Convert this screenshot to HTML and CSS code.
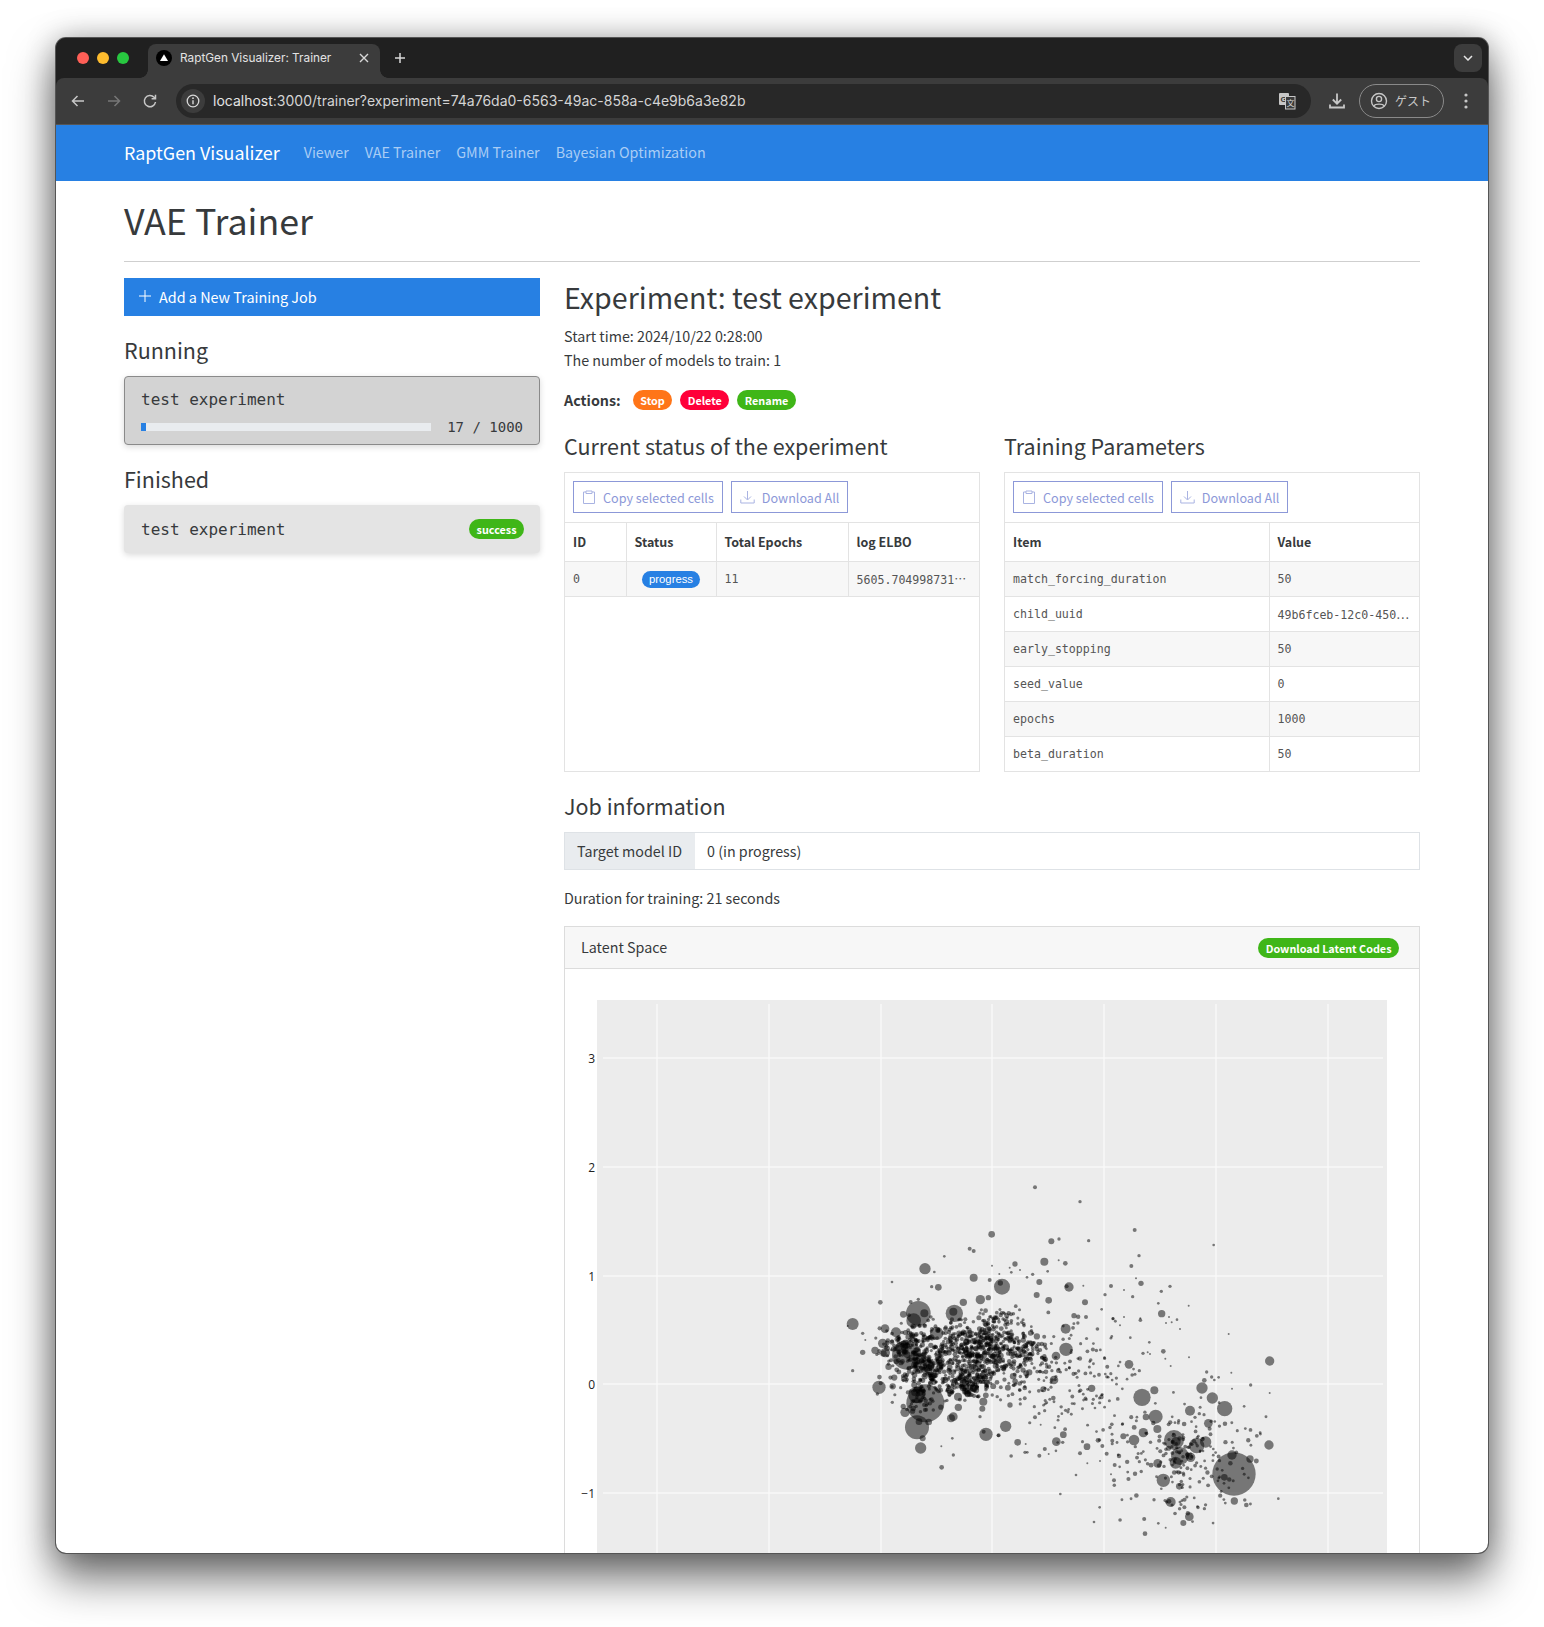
FILE: index.html
```html
<!DOCTYPE html>
<html lang="en">
<head>
    <meta charset="UTF-8">
    <meta name="viewport" content="width=device-width, initial-scale=1.0">
    <title>RaptGen Visualizer: Trainer</title>
    <link rel="stylesheet" href="styles.css">
</head>
<body>
    <div class="window">
        <div class="tabstrip">
            <div class="lights">
                <span class="light light-red"></span>
                <span class="light light-yellow"></span>
                <span class="light light-green"></span>
            </div>
            <div class="tab">
                <svg class="favicon" width="16" height="16" viewBox="0 0 16 16"><circle cx="8" cy="8" r="8" fill="#000"/><path d="M8 4.2 12 11H4z" fill="#fff"/></svg>
                <span class="tab-title">RaptGen Visualizer: Trainer</span>
                <svg class="tab-close" width="10" height="10" viewBox="0 0 10 10"><path d="M1 1l8 8M9 1l-8 8" stroke="#d8d8d8" stroke-width="1.4" fill="none"/></svg>
            </div>
            <svg class="tab-new" width="12" height="12" viewBox="0 0 12 12"><path d="M6 1v10M1 6h10" stroke="#d8d8d8" stroke-width="1.5" fill="none"/></svg>
            <div class="tab-menu">
                <svg width="10" height="6" viewBox="0 0 10 6"><path d="M1 1l4 4 4-4" stroke="#e6e6e6" stroke-width="1.5" fill="none"/></svg>
            </div>
        </div>
        <div class="toolbar">
            <svg class="tool-icon" width="16" height="16" viewBox="0 0 16 16"><path d="M14 8H2.5M7.5 3l-5 5 5 5" stroke="#c7c7c7" stroke-width="1.5" fill="none"/></svg>
            <svg class="tool-icon" width="16" height="16" viewBox="0 0 16 16"><path d="M2 8h11.500M8.500 3l5 5-5 5" stroke="#777" stroke-width="1.5" fill="none"/></svg>
            <svg class="tool-icon" width="16" height="16" viewBox="0 0 16 16"><path d="M13.500 9a5.600 5.600 0 1 1-1.400-4.700L13.500 5.700M13.500 1.800v3.900H9.600" stroke="#c7c7c7" stroke-width="1.5" fill="none"/></svg>
            <div class="omnibox">
                <span class="site-info">
                    <svg width="14" height="14" viewBox="0 0 14 14"><circle cx="7" cy="7" r="5.800" stroke="#d8d8d8" stroke-width="1.300" fill="none"/><path d="M7 6.200v4" stroke="#d8d8d8" stroke-width="1.400"/><circle cx="7" cy="4.200" r=".9" fill="#d8d8d8"/></svg>
                </span>
                <span class="url">localhost<span class="url-dim">:3000/trainer?experiment=74a76da0-6563-49ac-858a-c4e9b6a3e82b</span></span>
                <svg class="translate" width="18" height="18" viewBox="0 0 18 18">
                    <rect x="1" y="1" width="10" height="12" rx="1" fill="#c7c7c7"/>
                    <text x="2.500" y="10" font-size="8" font-weight="700" fill="#333" font-family="Liberation Sans, sans-serif">G</text>
                    <rect x="7.500" y="4.500" width="9.500" height="12.500" fill="#3c3c3c" stroke="#c7c7c7"/>
                    <text x="8.500" y="13.500" font-size="8" fill="#d8d8d8" font-family="Noto Sans CJK JP, sans-serif">文</text>
                </svg>
            </div>
            <svg class="download" width="18" height="18" viewBox="0 0 18 18"><path d="M9 1.500v10M4.800 7.500 9 11.700l4.200-4.200M2 12.500v3h14v-3" stroke="#c7c7c7" stroke-width="1.800" fill="none"/></svg>
            <div class="profile">
                <svg width="18" height="18" viewBox="0 0 18 18"><circle cx="9" cy="9" r="7.500" stroke="#c7c7c7" stroke-width="1.400" fill="none"/><circle cx="9" cy="7" r="2.600" stroke="#c7c7c7" stroke-width="1.400" fill="none"/><path d="M3.800 13.800c1.500-2.300 9-2.300 10.400 0" stroke="#c7c7c7" stroke-width="1.400" fill="none"/></svg>
                <span class="profile-name">ゲスト</span>
            </div>
            <svg class="kebab" width="4" height="16" viewBox="0 0 4 16"><circle cx="2" cy="2" r="1.600" fill="#c7c7c7"/><circle cx="2" cy="8" r="1.600" fill="#c7c7c7"/><circle cx="2" cy="14" r="1.600" fill="#c7c7c7"/></svg>
        </div>

        <nav class="navbar">
            <span class="brand">RaptGen Visualizer</span>
            <a class="nav-link">Viewer</a>
            <a class="nav-link">VAE Trainer</a>
            <a class="nav-link">GMM Trainer</a>
            <a class="nav-link">Bayesian Optimization</a>
        </nav>

        <main class="container">
            <h1 class="page-title">VAE Trainer</h1>
            <hr class="divider">
            <div class="columns">
                <aside>
                    <button class="add-job">
                        <svg width="12" height="12" viewBox="0 0 12 12"><path d="M6 0v12M0 6h12" stroke="#fff" stroke-width="1" fill="none"/></svg>
                        Add a New Training Job
                    </button>
                    <h4 class="section-title">Running</h4>
                    <div class="job-card job-running">
                        <div class="job-name">test experiment</div>
                        <div class="job-progress">
                            <div class="bar"><div class="bar-fill"></div></div>
                            <span class="bar-label">17 / 1000</span>
                        </div>
                    </div>
                    <h4 class="section-title">Finished</h4>
                    <div class="job-card job-finished">
                        <div class="job-name">test experiment</div>
                        <span class="pill pill-green">success</span>
                    </div>
                </aside>

                <section>
                    <h3 class="experiment-title">Experiment: test experiment</h3>
                    <div class="meta">Start time: 2024/10/22 0:28:00</div>
                    <div class="meta">The number of models to train: 1</div>
                    <div class="actions">
                        <b>Actions:</b>
                        <span class="pill pill-orange">Stop</span>
                        <span class="pill pill-red">Delete</span>
                        <span class="pill pill-green">Rename</span>
                    </div>

                    <div class="tables">
                        <div>
                            <h4 class="section-title">Current status of the experiment</h4>
                            <div class="grid-box">
                                <div class="grid-tools">
                                    <button class="tool-btn">
                                        <svg width="14" height="14" viewBox="0 0 14 14"><path d="M4 2H1.500v11.500h11V2H10M4 1h6v2.500H4z" stroke="#a9b3e2" fill="none"/></svg>
                                        Copy selected cells
                                    </button>
                                    <button class="tool-btn">
                                        <svg width="15" height="14" viewBox="0 0 15 14"><path d="M7.500 1v8.500M4 6.500l3.500 3.500L11 6.500M.8 9.500v3.500h13.400V9.500" stroke="#a9b3e2" fill="none"/></svg>
                                        Download All
                                    </button>
                                </div>
                                <table class="grid">
                                    <colgroup><col class="col-id"><col class="col-status"><col class="col-epochs"><col></colgroup>
                                    <thead><tr><th>ID</th><th>Status</th><th>Total Epochs</th><th>log ELBO</th></tr></thead>
                                    <tbody>
                                        <tr><td>0</td><td class="cell-center"><span class="pill-small">progress</span></td><td>11</td><td>5605.704998731<span class="dots">…</span></td></tr>
                                    </tbody>
                                </table>
                            </div>
                        </div>
                        <div>
                            <h4 class="section-title">Training Parameters</h4>
                            <div class="grid-box">
                                <div class="grid-tools">
                                    <button class="tool-btn">
                                        <svg width="14" height="14" viewBox="0 0 14 14"><path d="M4 2H1.500v11.500h11V2H10M4 1h6v2.500H4z" stroke="#a9b3e2" fill="none"/></svg>
                                        Copy selected cells
                                    </button>
                                    <button class="tool-btn">
                                        <svg width="15" height="14" viewBox="0 0 15 14"><path d="M7.500 1v8.500M4 6.500l3.500 3.500L11 6.500M.8 9.500v3.500h13.400V9.500" stroke="#a9b3e2" fill="none"/></svg>
                                        Download All
                                    </button>
                                </div>
                                <table class="grid">
                                    <colgroup><col class="col-item"><col></colgroup>
                                    <thead><tr><th>Item</th><th>Value</th></tr></thead>
                                    <tbody>
                                        <tr><td>match_forcing_duration</td><td>50</td></tr>
                                        <tr><td>child_uuid</td><td>49b6fceb-12c0-450<span class="dots">…</span></td></tr>
                                        <tr><td>early_stopping</td><td>50</td></tr>
                                        <tr><td>seed_value</td><td>0</td></tr>
                                        <tr><td>epochs</td><td>1000</td></tr>
                                        <tr><td>beta_duration</td><td>50</td></tr>
                                    </tbody>
                                </table>
                            </div>
                        </div>
                    </div>

                    <h4 class="section-title">Job information</h4>
                    <div class="input-group">
                        <span class="input-label">Target model ID</span>
                        <span class="input-value">0 (in progress)</span>
                    </div>
                    <div class="duration">Duration for training: 21 seconds</div>

                    <div class="card">
                        <div class="card-header">
                            <span class="card-title">Latent Space</span>
                            <span class="pill pill-green">Download Latent Codes</span>
                        </div>
                        <svg class="plot" width="854" height="760" viewBox="0 0 854 760">
                            <rect x="32" y="31" width="790" height="729" fill="#ececec"/>
                            <g id="grid" stroke="#f8f8f8" stroke-width="1.500"></g>
                            <g class="tick-labels" text-anchor="end">
                                <text x="30" y="94">3</text>
                                <text x="30" y="203">2</text>
                                <text x="30" y="312">1</text>
                                <text x="30" y="420">0</text>
                                <text x="30" y="529">−1</text>
                            </g>
                            <g id="points" transform="translate(255 201) scale(.33333)"></g>
                        </svg>
                    </div>
                </section>
            </div>
        </main>
    </div>
    <script src="plot.js"></script>
</body>
</html>
```

FILE: styles.css
```css
* {
    box-sizing: border-box;
}
html, body {
    height: 1627px;
    overflow: hidden;
}
body {
    margin: 0;
    padding: 38px 56px 74px;
    background-color: #fff;
    color: #373a3c;
    font-family: "Noto Sans CJK JP", "Noto Sans", sans-serif;
    font-size: 14.300px;
    line-height: 24px;
}
.window {
    height: 1515px;
    overflow: hidden;
    background-color: #202020;
    border-radius: 10px;
    box-shadow: 0 0 0 1px #555, 0 24px 44px 2px rgba(0, 0, 0, .55), 0 0 30px rgba(0, 0, 0, .28);
}

/* browser chrome */
.tabstrip {
    display: flex;
    align-items: flex-end;
    height: 40px;
    background-color: #202020;
    padding-left: 21px;
}
.lights {
    display: flex;
    gap: 8px;
    align-self: center;
    margin-right: 19px;
}
.light {
    width: 12px;
    height: 12px;
    border-radius: 50%;
}
.light-red { background-color: #ff5f57; }
.light-yellow { background-color: #febc2e; }
.light-green { background-color: #28c840; }
.tab {
    position: relative;
    display: flex;
    align-items: center;
    width: 232px;
    height: 34px;
    padding: 0 11px 6px 8px;
    background-color: #3c3c3c;
    border-radius: 8px 8px 0 0;
    color: #e3e3e3;
    font-family: "Inter", sans-serif;
    font-size: 11.800px;
}
.tab::before, .tab::after {
    content: "";
    position: absolute;
    bottom: 0;
    width: 8px;
    height: 8px;
}
.tab::before {
    left: -8px;
    background: radial-gradient(circle at 0 0, transparent 7.5px, #3c3c3c 8px);
}
.tab::after {
    right: -8px;
    background: radial-gradient(circle at 100% 0, transparent 7.5px, #3c3c3c 8px);
}
.tab-title {
    flex: 1;
    margin-left: 8px;
    white-space: nowrap;
}
.tab-new {
    align-self: center;
    margin-left: 14px;
}
.tab-menu {
    display: flex;
    align-items: center;
    justify-content: center;
    align-self: center;
    width: 28px;
    height: 28px;
    margin-left: auto;
    margin-right: 6px;
    background-color: #3c3c3c;
    border-radius: 8px;
}
.toolbar {
    position: relative;
    display: flex;
    align-items: center;
    height: 47px;
    padding-left: 14px;
    background-color: #3c3c3c;
    border-bottom: 1px solid #555;
    border-radius: 8px 8px 0 0;
}
.tool-icon {
    margin-right: 20px;
}
.omnibox {
    display: flex;
    align-items: center;
    width: 1135px;
    height: 34px;
    margin-left: -2px;
    padding: 0 15px 0 5px;
    background-color: #282828;
    border-radius: 17px;
}
.site-info {
    display: flex;
    align-items: center;
    justify-content: center;
    width: 24px;
    height: 24px;
    background-color: #3c3c3c;
    border-radius: 50%;
}
.url {
    flex: 1;
    margin-left: 8px;
    color: #e3e3e3;
    font-family: "Inter", sans-serif;
    font-size: 14px;
    white-space: nowrap;
}
.url-dim {
    color: #d4d4d4;
}
.download {
    margin-left: 17px;
}
.profile {
    display: flex;
    align-items: center;
    width: 85px;
    height: 34px;
    margin-left: 13px;
    padding-left: 10px;
    border: 1px solid #8a8a8a;
    border-radius: 17px;
}
.profile-name {
    margin-left: 7px;
    color: #c7c7c7;
    font-size: 12px;
}
.kebab {
    margin-left: 20px;
}

/* site */
.navbar {
    display: flex;
    align-items: center;
    gap: 16px;
    height: 56px;
    padding: 0 68px 2px;
    background-color: #2780e3;
}
.brand {
    margin-right: 8px;
    color: #fff;
    font-size: 17.900px;
}
.nav-link {
    color: #aacdf5;
    font-size: 14.300px;
}
.container {
    min-height: 1400px;
    padding: 14px 68px 0;
    background-color: #fff;
}
.page-title {
    margin: 0 0 18px;
    font-size: 35.800px;
    font-weight: 400;
    line-height: 48px;
}
.divider {
    height: 1px;
    margin: 0 0 16px;
    border: 0;
    background-color: #cfcfcf;
}
.columns {
    display: grid;
    grid-template-columns: 416px 856px;
    gap: 24px;
}
.add-job {
    display: flex;
    align-items: center;
    gap: 8px;
    width: 100%;
    height: 38px;
    padding: 0 15px 2px;
    border: 0;
    background-color: #2780e3;
    color: #fff;
    font-family: inherit;
    font-size: 14.400px;
}
.section-title {
    margin: 19px 0 12px;
    font-size: 21.500px;
    font-weight: 400;
    line-height: 29px;
}
.job-card {
    padding: 0 16px;
    border-radius: 4px;
    font-family: "DejaVu Sans Mono", monospace;
    font-size: 16px;
    box-shadow: 0 2px 6px rgba(0, 0, 0, .15);
}
.job-running {
    height: 69px;
    padding-top: 11px;
    background-color: #d3d3d3;
    border: 1px solid #8a8a8a;
}
.job-finished {
    display: flex;
    align-items: center;
    justify-content: space-between;
    height: 48px;
    padding-left: 17px;
    background-color: #e4e4e4;
}
.job-finished .job-name {
    margin-top: 2px;
}
.job-progress {
    display: flex;
    align-items: center;
    justify-content: space-between;
    margin-top: 3px;
}
.bar {
    width: 290px;
    height: 8px;
    background-color: #e9ecef;
}
.bar-fill {
    width: 5px;
    height: 100%;
    background-color: #2780e3;
}
.bar-label {
    font-size: 14px;
}
.pill {
    display: inline-flex;
    align-items: center;
    height: 20px;
    padding: 0 7.500px;
    border-radius: 10px;
    color: #fff;
    font-family: "Noto Sans CJK JP", sans-serif;
    font-size: 10.800px;
    font-weight: 700;
}
.pill-green { background-color: #3fb618; }
.pill-orange { background-color: #ff7518; }
.pill-red { background-color: #ff0039; }
.experiment-title {
    margin: 0 0 8px;
    font-size: 28.600px;
    font-weight: 400;
    line-height: 38px;
}
.actions {
    display: flex;
    align-items: center;
    gap: 8px;
    margin-top: 16px;
}
.actions b {
    margin-right: 4px;
}
.tables {
    display: grid;
    grid-template-columns: 416px 416px;
    gap: 24px;
}
.grid-box {
    height: 300px;
    border: 1px solid #e3e3e3;
}
.grid-tools {
    display: flex;
    gap: 8px;
    height: 50px;
    padding: 8px 8px 0;
    border-bottom: 1px solid #e3e3e3;
}
.tool-btn {
    display: flex;
    align-items: center;
    gap: 7px;
    height: 32px;
    padding: 0 8px;
    background-color: #fff;
    border: 1px solid #8c98d8;
    color: #8c98d8;
    font-family: inherit;
    font-size: 12.600px;
    white-space: nowrap;
}
.grid {
    width: 100%;
    table-layout: fixed;
    border-collapse: collapse;
}
.col-id { width: 61px; }
.col-status { width: 90px; }
.col-epochs { width: 132px; }
.col-item { width: 264px; }
.grid th, .grid td {
    padding: 1px 8px 0;
    border-bottom: 1px solid #e3e3e3;
    border-right: 1px solid #e3e3e3;
    text-align: left;
    white-space: nowrap;
    overflow: hidden;
}
.grid th:last-child, .grid td:last-child {
    border-right: 0;
}
.grid th {
    height: 38px;
    font-size: 12.500px;
    font-weight: 700;
}
.grid td {
    height: 35px;
    color: #555;
    font-family: "DejaVu Sans Mono", monospace;
    font-size: 11.600px;
}
.grid td:last-child {
    padding-right: 0;
}
.grid tbody tr:nth-child(odd) {
    background-color: #f7f7f7;
}
.dots {
    font-family: "Noto Sans CJK JP", sans-serif;
    font-size: 12px;
}
.cell-center {
    text-align: center !important;
}
.pill-small {
    display: inline-block;
    margin-top: 2px;
    padding: 0 7px;
    background-color: #2780e3;
    border-radius: 9px;
    color: #fff;
    font-family: "Liberation Sans", sans-serif;
    font-size: 11.300px;
    line-height: 17px;
}
.input-group {
    display: flex;
    height: 38px;
    border: 1px solid #dee2e6;
}
.input-label {
    width: 130px;
    padding: 6px 12px;
    background-color: #e9ecef;
}
.input-value {
    padding: 6px 12px;
}
.duration {
    margin-top: 16px;
}
.card {
    margin-top: 16px;
    border: 1px solid #dcdcdc;
}
.card-header {
    display: flex;
    align-items: center;
    justify-content: space-between;
    height: 42px;
    padding: 0 20px 0 16px;
    background-color: #f7f7f7;
    border-bottom: 1px solid #dcdcdc;
}
.card-title {
    margin-top: -2px;
}
.plot {
    display: block;
}
.tick-labels {
    fill: #222;
    font-family: "Open Sans", sans-serif;
    font-size: 12px;
}
```

FILE: plot.js
```js
// x/y tick lines of the latent space plot
const gridGroup = document.getElementById('grid');
const pointsGroup = document.getElementById('points');
const svgNS = 'http://www.w3.org/2000/svg';

[92, 204, 316, 427, 539, 651, 763].forEach(function(x) {
    const line = document.createElementNS(svgNS, 'line');
    line.setAttribute('x1', x);
    line.setAttribute('x2', x);
    line.setAttribute('y1', 35);
    line.setAttribute('y2', 760);
    gridGroup.appendChild(line);
});
[89, 198, 307, 415, 524].forEach(function(y) {
    const line = document.createElementNS(svgNS, 'line');
    line.setAttribute('x1', 38);
    line.setAttribute('x2', 818);
    line.setAttribute('y1', y);
    line.setAttribute('y2', y);
    gridGroup.appendChild(line);
});

// the larger markers, [x, y, r]
const markers = [
    [645,52,6],[780,95,5],[944,180,6],[1181,225,4],[515,193,10],[694,214,9],[717,207,5],[806,212,5],
    [449,236,6],[461,243,6],[373,259,4],[315,296,17],[343,306,4],[216,336,4],[673,275,12],[736,280,7],
    [716,271,3],[585,282,8],[957,257,5],[934,288,6],[516,287,3],[461,323,12],[509,330,6],[546,350,24],
    [541,339,8],[658,336,9],[683,304,4],[638,313,5],[621,322,4],[600,300,3],[574,307,4],[569,293,3],
    [538,312,3],[747,351,14],[740,349,6],[790,347,3],[873,348,6],[948,325,3],[963,340,8],[1024,364,5],
    [1050,349,5],[912,360,3],[855,374,5],[938,380,5],[355,352,10],[335,350,5],[181,397,7],[98,462,18],
    [83,468,3],[128,490,5],[136,510,3],[128,547,8],[98,602,5],[295,430,37],[281,452,22],[313,430,12],
    [403,430,26],[400,425,12],[430,397,11],[481,389,14],[505,383,8],[650,375,9],[686,391,10],[762,437,8],
    [795,397,9],[798,441,6],[1015,400,4],[1106,407,3],[1025,431,11],[1047,441,3],[1071,449,4],[1038,459,3],
    [1055,457,3],[1080,477,3],[879,446,5],[879,446,4],[912,441,3],[961,445,3],[845,418,4],[900,466,3],
    [1226,492,3],[737,476,15],[738,538,20],[708,558,13],[707,562,5],[931,503,4],[988,517,4],[1030,544,7],
    [969,550,5],[983,547,3],[990,552,3],[1107,562,3],[1036,566,3],[1052,588,3],[927,583,13],[958,602,5],
    [1349,573,14],[1160,606,5],[1234,608,3],[1175,621,5],[1196,622,4],[1183,630,4],[1153,631,7],[1292,645,5],
    [1236,656,3],[1349,669,3],[1146,654,17],[1177,684,17],[1214,716,23],[1003,661,12],[966,682,26],[1110,722,15],
    [1007,740,21],[978,741,10],[1012,777,12],[970,788,14],[942,810,16],[910,799,9],[1062,810,30],[1068,815,14],
    [1080,858,27],[1067,878,18],[1112,862,14],[1112,862,8],[1130,827,23],[1157,816,17],[1165,760,13],[1013,880,13],
    [1030,931,20],[1078,949,10],[1242,912,65],[1236,855,14],[1290,867,11],[1213,922,10],[1243,993,11],[1279,1005,7],
    [1347,825,14],[1375,986,4],[1052,996,15],[1047,994,7],[1108,1040,13],[1090,1059,9],[975,1091,7],[1037,1073,3],
    [1015,1060,4],[822,1056,4],[839,1012,4],[721,972,4],[768,915,4],[365,892,7],[400,855,5],[397,805,4],
    [364,829,3],[302,834,17],[291,772,36],[297,755,10],[326,756,10],[308,805,9],[316,700,57],[255,727,14],
    [177,652,20],[172,672,5],[216,650,5],[242,653,5],[217,697,5],[290,675,25],[260,555,44],[196,548,14],
    [165,541,11],[188,520,14],[195,476,13],[228,487,15],[250,433,10],[272,396,6],[295,388,5],[350,490,20],
    [320,590,22],[390,660,12],[415,712,11],[400,740,13],[393,745,12],[498,793,20],[491,785,6],[557,769,17],
    [536,796,6],[593,817,10],[709,815,13],[730,794,10],[645,742,6],[662,764,3],[801,830,10],[847,828,6],
    [834,811,7],[860,851,6],[884,885,6],[882,931,6],[873,913,3],[658,857,6],[615,847,5],[617,822,3],
    [686,852,3],[802,880,3],[840,873,3],[780,850,6],[815,655,11],[702,630,13],[715,602,7],[700,684,7],
    [670,658,9],[487,716,9],[570,705,8],[490,695,12],[480,740,5],[414,680,12]
];

// the small ones are a seeded cloud: [cx, cy, sdx, sdy, count, rmin, rmax]
const clouds = [
    [440, 565, 130, 62, 720, 4.500, 11],
    [320, 590, 34, 32, 80, 5, 11],
    [260, 530, 34, 30, 60, 5, 11],
    [450, 640, 36, 24, 80, 5, 11],
    [480, 500, 42, 24, 50, 5, 10],
    [545, 450, 36, 30, 50, 4.500, 9],
    [300, 680, 30, 24, 40, 5, 11],
    [620, 530, 30, 24, 36, 4.500, 10],
    [760, 640, 110, 105, 170, 4, 7],
    [1100, 860, 115, 95, 190, 4, 8],
    [1070, 830, 24, 24, 16, 4.500, 10]
];

let seed = 20241022;
function rand() {
    seed = (seed * 1664525 + 1013904223) % 4294967296;
    return seed / 4294967296;
}
// normal sample, cut off so no stray dots land far outside the clusters
function gauss() {
    let g = 9;
    while (Math.abs(g) > 2.1) {
        g = Math.sqrt(-2 * Math.log(rand() + 1e-6)) * Math.cos(2 * Math.PI * rand());
    }
    return g;
}
function addPoint(x, y, r) {
    const dot = document.createElementNS(svgNS, 'circle');
    dot.setAttribute('cx', x.toFixed(1));
    dot.setAttribute('cy', y.toFixed(1));
    dot.setAttribute('r', r.toFixed(1));
    dot.setAttribute('fill-opacity', '.5');
    pointsGroup.appendChild(dot);
}

markers.forEach(function(m) {
    addPoint(m[0], m[1], m[2]);
});
clouds.forEach(function(c) {
    for (let i = 0; i < c[4]; i++) {
        const x = c[0] + gauss() * c[2];
        const y = c[1] + gauss() * c[3];
        const r = c[5] + rand() * rand() * (c[6] - c[5]);
        addPoint(x, y, r);
    }
});
```
